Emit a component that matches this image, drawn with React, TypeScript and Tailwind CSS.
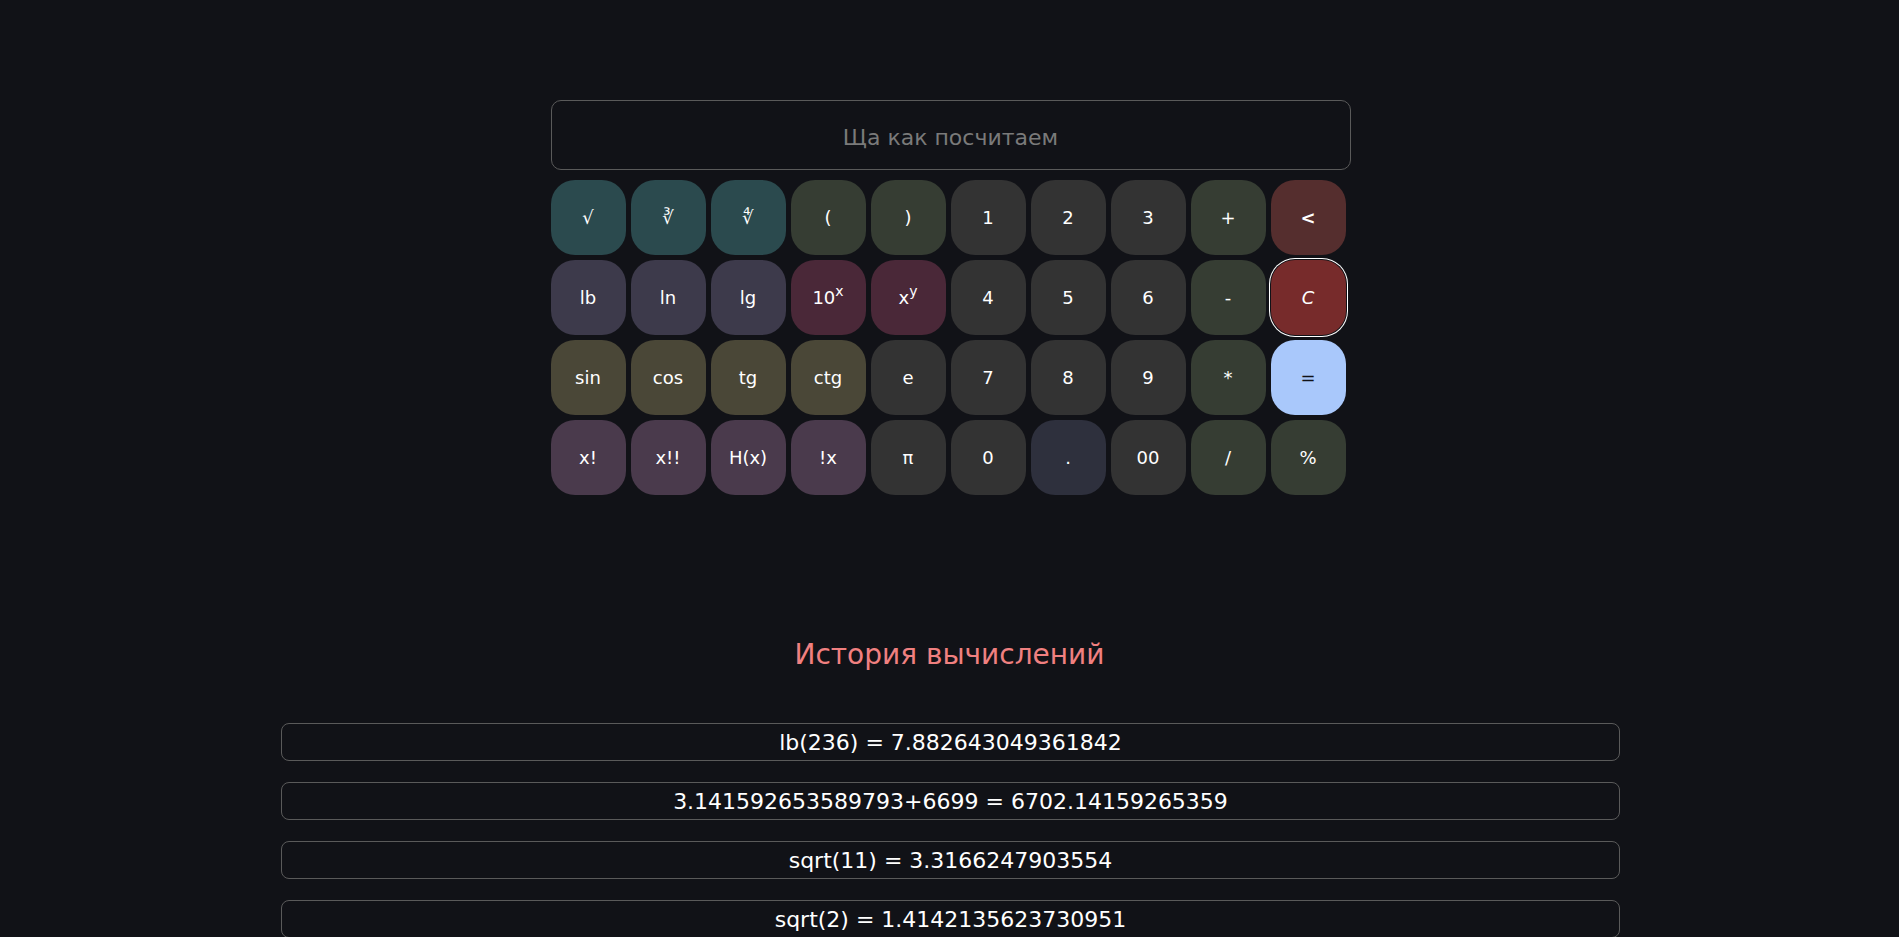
const keys: { label: React.ReactNode; bg: string; extra?: string }[] = [
  { label: "√", bg: "bg-[#2b4a4e]" },
  { label: "∛", bg: "bg-[#2b4a4e]" },
  { label: "∜", bg: "bg-[#2b4a4e]" },
  { label: "(", bg: "bg-[#363d33]" },
  { label: ")", bg: "bg-[#363d33]" },
  { label: "1", bg: "bg-[#333333]" },
  { label: "2", bg: "bg-[#333333]" },
  { label: "3", bg: "bg-[#333333]" },
  { label: "+", bg: "bg-[#363d33]" },
  { label: "<", bg: "bg-[#552e2e]", extra: "font-bold" },

  { label: "lb", bg: "bg-[#3d3a4b]" },
  { label: "ln", bg: "bg-[#3d3a4b]" },
  { label: "lg", bg: "bg-[#3d3a4b]" },
  {
    label: (
      <>
        10<sup className="text-[14px]">x</sup>
      </>
    ),
    bg: "bg-[#4a2838]",
  },
  {
    label: (
      <>
        x<sup className="text-[14px]">y</sup>
      </>
    ),
    bg: "bg-[#4a2838]",
  },
  { label: "4", bg: "bg-[#333333]" },
  { label: "5", bg: "bg-[#333333]" },
  { label: "6", bg: "bg-[#333333]" },
  { label: "-", bg: "bg-[#363d33]" },
  {
    label: "C",
    bg: "bg-[#772b2b]",
    extra: "italic ring-1 ring-white ring-offset-1 ring-offset-[#111217]",
  },

  { label: "sin", bg: "bg-[#4a4737]" },
  { label: "cos", bg: "bg-[#4a4737]" },
  { label: "tg", bg: "bg-[#4a4737]" },
  { label: "ctg", bg: "bg-[#4a4737]" },
  { label: "e", bg: "bg-[#333333]" },
  { label: "7", bg: "bg-[#333333]" },
  { label: "8", bg: "bg-[#333333]" },
  { label: "9", bg: "bg-[#333333]" },
  { label: "*", bg: "bg-[#363d33]" },
  { label: "=", bg: "bg-[#a9c8fb]", extra: "!text-[#111217]" },

  { label: "x!", bg: "bg-[#4a3a4c]" },
  { label: "x!!", bg: "bg-[#4a3a4c]" },
  { label: "H(x)", bg: "bg-[#4a3a4c]" },
  { label: "!x", bg: "bg-[#4a3a4c]" },
  { label: "π", bg: "bg-[#333333]" },
  { label: "0", bg: "bg-[#333333]" },
  { label: ".", bg: "bg-[#2e303d]" },
  { label: "00", bg: "bg-[#333333]" },
  { label: "/", bg: "bg-[#363d33]" },
  { label: "%", bg: "bg-[#363d33]" },
];

const history = [
  "lb(236) = 7.882643049361842",
  "3.141592653589793+6699 = 6702.14159265359",
  "sqrt(11) = 3.3166247903554",
  "sqrt(2) = 1.4142135623730951",
];

export default function App() {
  return (
    <div className="min-h-screen bg-[#111217] pt-[100px] pb-10 font-['Comic_Sans_MS','DejaVu_Sans',sans-serif]">
      <div className="pl-[2px]">
        <div className="w-[800px] mx-auto">
          <input
            type="text"
            placeholder="Ща как посчитаем"
            className="w-full h-[70px] pt-[4px] bg-transparent border border-[#5a5a5a] rounded-[10px] text-center text-[22px] text-white placeholder:text-[#7a7a7a] outline-none"
          />

          <div className="grid grid-cols-10 gap-y-[5px] mt-[10px]">
            {keys.map((k, i) => (
              <button
                key={i}
                className={`w-[75px] h-[75px] rounded-[24px] flex items-center justify-center text-[18px] text-white ${k.bg} ${k.extra ?? ""}`}
              >
                {k.label}
              </button>
            ))}
          </div>
        </div>
      </div>

      <h2 className="mt-[143px] text-center text-[28px] leading-[34px] text-[#f08080]">
        История вычислений
      </h2>

      <div className="ml-[281px] mr-[279px] mt-[51px] flex flex-col gap-[21px]">
        {history.map((h, i) => (
          <div
            key={i}
            className="h-[38px] border border-[#5a5a5a] rounded-[8px] flex items-center justify-center text-[22px] text-white"
          >
            {h}
          </div>
        ))}
      </div>
    </div>
  );
}
